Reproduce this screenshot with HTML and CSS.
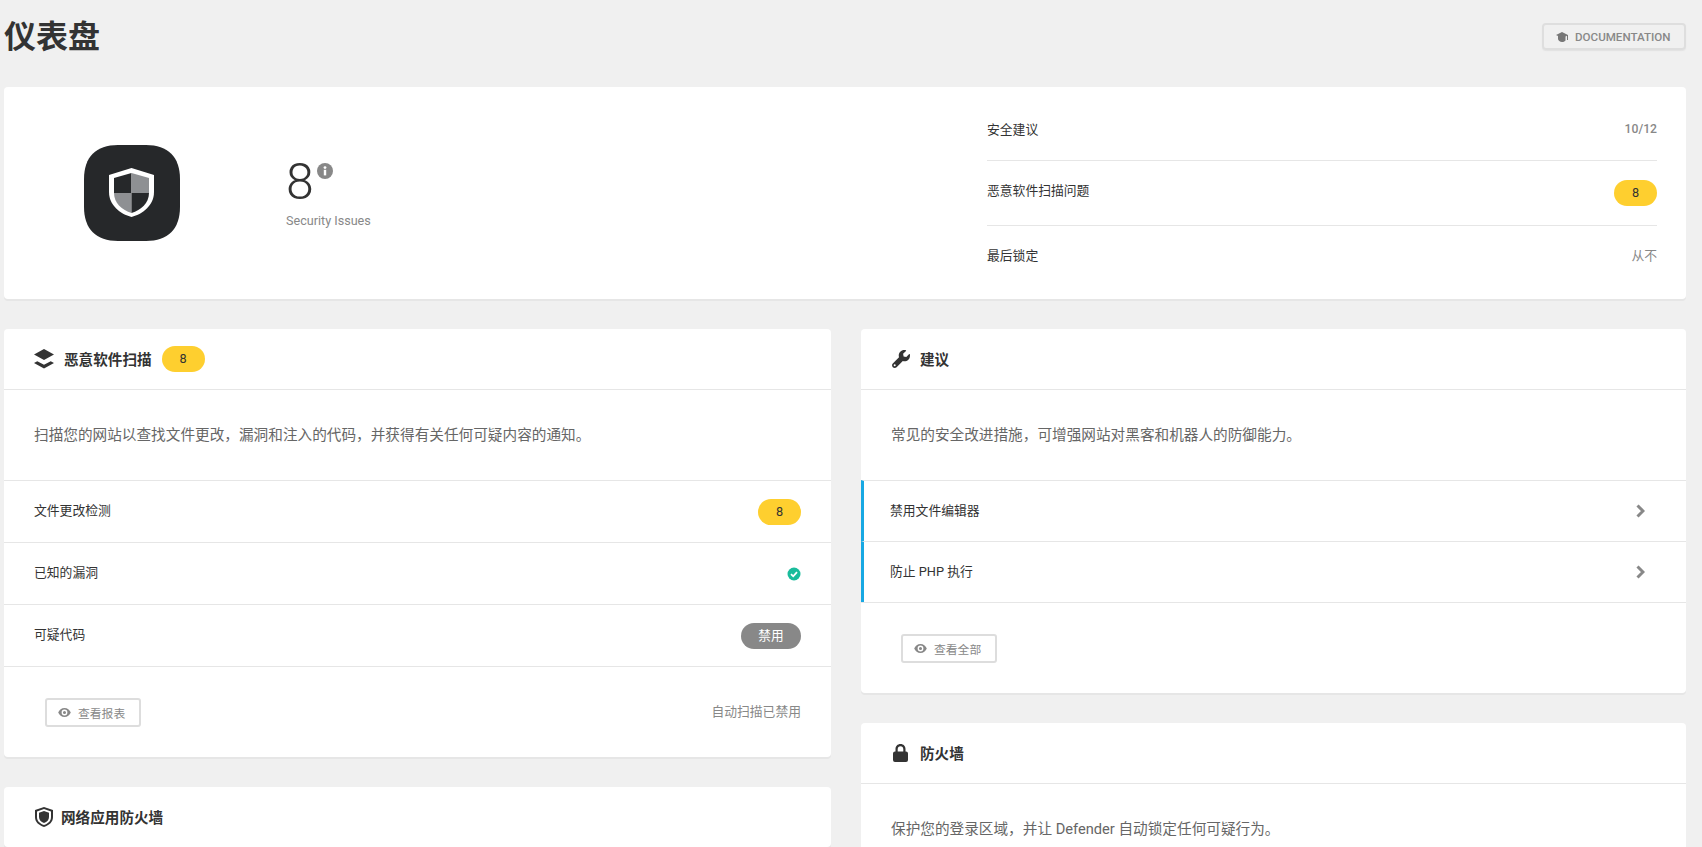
FILE: index.html
```html
<!DOCTYPE html>
<html lang="zh-CN">
<head>
<meta charset="utf-8">
<title>仪表盘</title>
<link rel="stylesheet" href="styles.css">
</head>
<body>
<div class="page">
  <header class="top">
    <h1>仪表盘</h1>
    <a class="btn btn-doc">
      <svg class="ico-cap" viewBox="0 0 12 10"><path d="M6 0 0 3l2 1v3c0 1.500 2 3 4 3 1.800 0 3-.7 3.500-1.500V4.500L11 3.800V8h1V3z"/></svg>
      DOCUMENTATION
    </a>
  </header>

  <section class="card summary">
    <div class="sum-left">
      <svg class="shield-tile" viewBox="0 0 96 96">
        <path d="M34 0h28c22 0 34 12 34 34v28c0 22-12 34-34 34H34C12 96 0 84 0 62V34C0 12 12 0 34 0z" fill="#26282a"/>
        <path d="M47.500 23 25 30v17c0 13 11 22 22.500 25C59 69 70 60 70 47V30z" fill="#fff"/>
        <path d="M47.500 28 30 33v15h17.500z" fill="#26282a"/>
        <path d="M47.500 28 65 33v15H47.500z" fill="#8e9093"/>
        <path d="M30 48h17.500v20C38 65 30 58 30 48z" fill="#8e9093"/>
        <path d="M47.500 48H65c0 10-8 17-17.500 20z" fill="#26282a"/>
      </svg>
      <div class="sum-stat">
        <div class="sum-num"><span>8</span><svg class="ico-info" viewBox="0 0 16 16"><circle cx="8" cy="8" r="8" fill="#888"/><rect x="6.800" y="6.800" width="2.400" height="5.600" fill="#fff"/><circle cx="8" cy="4.600" r="1.400" fill="#fff"/></svg></div>
        <div class="sum-label">Security Issues</div>
      </div>
    </div>
    <ul class="sum-list">
      <li><span>安全建议</span><span class="muted num">10/12</span></li>
      <li><span>恶意软件扫描问题</span><span class="badge">8</span></li>
      <li><span>最后锁定</span><span class="muted">从不</span></li>
    </ul>
  </section>

  <div class="cols">
    <div class="col col-left">
      <section class="card">
        <div class="card-head">
          <svg class="ico ico-layers" viewBox="0 0 20 20"><path d="M10 0 20 5.500 10 11 0 5.500z"/><path d="M0 14l3.300-1.800L10 15.800l6.700-3.600L20 14l-10 5.500z"/></svg>
          <h2>恶意软件扫描</h2>
          <span class="badge">8</span>
        </div>
        <p class="desc">扫描您的网站以查找文件更改，漏洞和注入的代码，并获得有关任何可疑内容的通知。</p>
        <div class="row"><span class="row-label">文件更改检测</span><span class="badge">8</span></div>
        <div class="row"><span class="row-label">已知的漏洞</span>
          <svg class="ico-check" viewBox="0 0 14 14"><circle cx="7" cy="7" r="6.500" fill="#1abc9c"/><path d="M4 7.200 6.200 9.300 10 5.200" fill="none" stroke="#fff" stroke-width="1.800"/></svg>
        </div>
        <div class="row"><span class="row-label">可疑代码</span><span class="badge badge-off">禁用</span></div>
        <div class="card-foot">
          <a class="btn btn-view">
            <svg class="ico-eye" viewBox="0 0 14 10"><path d="M7 0C3.800 0 1.200 2 0 5c1.200 3 3.800 5 7 5s5.800-2 7-5c-1.200-3-3.800-5-7-5zm0 8.200A3.200 3.200 0 1 1 7 1.800a3.200 3.200 0 0 1 0 6.400zM7 3.300a1.700 1.700 0 1 0 0 3.400 1.700 1.700 0 0 0 0-3.400z"/></svg>
            查看报表
          </a>
          <span class="foot-note">自动扫描已禁用</span>
        </div>
      </section>
      <section class="card">
        <div class="card-head head-waf">
          <svg class="ico ico-shield" viewBox="0 0 18 20"><path d="M9 0 0 3v7c0 5 3.500 8 9 10 5.500-2 9-5 9-10V3zm0 2 7 2.400V10c0 4-2.800 6.500-7 8-4.200-1.500-7-4-7-8V4.400z"/><path d="M9 4 4 5.800V10c0 3 2 5 5 6 3-1 5-3 5-6V5.800z"/></svg>
          <h2>网络应用防火墙</h2>
        </div>
      </section>
    </div>

    <div class="col">
      <section class="card">
        <div class="card-head">
          <svg class="ico ico-wrench" viewBox="0 0 18 18"><path d="M17.800 4.200c-.1-.3-.4-.3-.6-.1l-2.900 2.900-2.700-.5-.5-2.700L14 .9c.2-.2.1-.5-.1-.6C11.900-.3 9.700.2 8.300 1.700 6.800 3.200 6.400 5.300 7 7.200L.8 13.400c-1 1-1 2.700 0 3.800 1 1 2.700 1 3.800 0l6.200-6.200c1.900.6 4 .2 5.500-1.300 1.500-1.500 2-3.600 1.500-5.500zM2.700 16.300a1 1 0 1 1 0-2 1 1 0 0 1 0 2z"/></svg>
          <h2>建议</h2>
        </div>
        <p class="desc">常见的安全改进措施，可增强网站对黑客和机器人的防御能力。</p>
        <div class="row row-tip"><span class="row-label">禁用文件编辑器</span><svg class="ico-chev" viewBox="0 0 9 14"><path d="M1.500 1.500 7 7 1.500 12.500" fill="none" stroke="#888" stroke-width="3"/></svg></div>
        <div class="row row-tip"><span class="row-label">防止 PHP 执行</span><svg class="ico-chev" viewBox="0 0 9 14"><path d="M1.500 1.500 7 7 1.500 12.500" fill="none" stroke="#888" stroke-width="3"/></svg></div>
        <div class="card-foot foot-right">
          <a class="btn btn-view">
            <svg class="ico-eye" viewBox="0 0 14 10"><path d="M7 0C3.800 0 1.200 2 0 5c1.200 3 3.800 5 7 5s5.800-2 7-5c-1.200-3-3.800-5-7-5zm0 8.200A3.200 3.200 0 1 1 7 1.800a3.200 3.200 0 0 1 0 6.400zM7 3.300a1.700 1.700 0 1 0 0 3.400 1.700 1.700 0 0 0 0-3.400z"/></svg>
            查看全部
          </a>
        </div>
      </section>
      <section class="card">
        <div class="card-head">
          <svg class="ico ico-lock" viewBox="0 0 15 18"><path d="M7.500 0C4.500 0 2.500 2.200 2.500 5v2.500H2a2 2 0 0 0-2 2V16a2 2 0 0 0 2 2h11a2 2 0 0 0 2-2V9.500a2 2 0 0 0-2-2h-.5V5c0-2.800-2-5-5-5zm0 2.200c1.700 0 2.800 1.200 2.800 3v2.300H4.700V5.200c0-1.800 1.100-3 2.800-3z"/></svg>
          <h2>防火墙</h2>
        </div>
        <p class="desc">保护您的登录区域，并让 Defender 自动锁定任何可疑行为。</p>
      </section>
    </div>
  </div>
</div>
</body>
</html>
```

FILE: styles.css
```css
* { box-sizing: border-box; }
html, body { margin: 0; height: 847px; overflow: hidden; }
body {
  background: #f0f0f0;
  color: #333;
  font-family: Roboto, "Noto Sans CJK SC", sans-serif;
  font-size: 12.8px;
}
.page { padding: 0 16px 0 4px; }

.top { display: flex; justify-content: space-between; align-items: center; height: 87px; padding-bottom: 14px; }
h1 { margin: 0; font-size: 32px; line-height: 40px; font-weight: 700; color: #333; }

.btn {
  display: inline-flex; align-items: center;
  border: 2px solid #ddd; border-radius: 3px;
  color: #888; font-size: 11.800px; height: 29px;
}
.btn-doc {
  width: 144px; height: 27px; padding-left: 12px; gap: 7px;
  font-size: 11.600px; font-weight: 500;
  border-color: #dedede; border-radius: 4px;
  box-shadow: 0 1px 1px #e2e2e2;
}
.ico-cap { width: 12px; height: 10px; fill: #777; flex: none; }
.btn-view { width: 96px; padding-left: 11px; gap: 7px; background: #fff; }
.ico-eye { width: 13px; height: 9px; fill: #888; flex: none; }

.card {
  background: #fff; border-radius: 4px;
  box-shadow: 0 2px 0 #e6e6e6;
}

.summary { display: flex; height: 212px; margin-bottom: 30px; }
.sum-left { width: 983px; display: flex; align-items: flex-start; padding: 58px 0 0 80px; }
.shield-tile { width: 96px; height: 96px; flex: none; }
.sum-stat { margin-left: 106px; padding-top: 8px; }
.sum-num { display: flex; align-items: flex-start; height: 53px; }
.sum-num span { font-size: 50px; line-height: 58px; font-weight: 300; color: #333; }
.ico-info { width: 16px; height: 16px; margin: 10px 0 0 3px; }
.sum-label { margin-top: 7px; font-size: 12.600px; line-height: 16px; color: #888; }

.sum-list { flex: 1; list-style: none; margin: 0; padding: 11px 29px 0 0; }
.sum-list li { display: flex; justify-content: space-between; align-items: flex-start; padding: 19px 0; line-height: 21px; border-bottom: 1px solid #e6e6e6; }
.sum-list li:first-child { padding: 21px 0 20px; }
.sum-list li:last-child { border-bottom: 0; }
.muted { color: #888; }
.num { font-size: 12.200px; font-weight: 500; }

.badge {
  display: inline-block; width: 43px; height: 26px; border-radius: 13px;
  background: #fecf2f; color: #333; text-align: center;
  font-size: 12.700px; line-height: 26px;
}
.badge-off { width: 60px; background: #888; color: #fff; }

.cols { display: flex; gap: 30px; }
.col { flex: 1 1 0; min-width: 0; display: flex; flex-direction: column; gap: 30px; }
.col-left { flex: 0 0 827px; }

.card-head { display: flex; align-items: center; height: 60px; padding-left: 31px; gap: 10px; }
.card-head.head-waf { gap: 8px; }
h2 { margin: 0 0 2px; font-size: 14.600px; font-weight: 700; color: #333; }
.ico { fill: #333; flex: none; }
.ico-layers { width: 20px; height: 20px; margin-left: -1px; }
.ico-shield { width: 18px; height: 20px; }
.ico-wrench { width: 18px; height: 18px; }
.ico-lock { width: 15px; height: 18px; margin: 0 2px 0 1px; }

.desc {
  margin: 0; height: 91px; padding-left: 30px;
  border-top: 1px solid #e6e6e6;
  font-size: 14.650px; line-height: 90px; color: #666;
}

.row {
  display: flex; justify-content: space-between; align-items: center;
  height: 62px; padding: 0 30px;
  border-top: 1px solid #e6e6e6;
  line-height: 21px;
}
.row-label { margin-bottom: 2px; }
.row-tip { height: 61px; padding: 0 41px 0 26px; border-left: 3px solid #17a8e3; }
.ico-check { width: 14px; height: 14px; }
.ico-chev { width: 9px; height: 14px; }

.card-foot {
  display: flex; justify-content: space-between; align-items: center;
  height: 91px; padding: 0 30px 0 41px;
  border-top: 1px solid #e6e6e6;
}
.foot-right { padding-left: 40px; }
.foot-note { color: #888; margin-bottom: 3px; }
```
